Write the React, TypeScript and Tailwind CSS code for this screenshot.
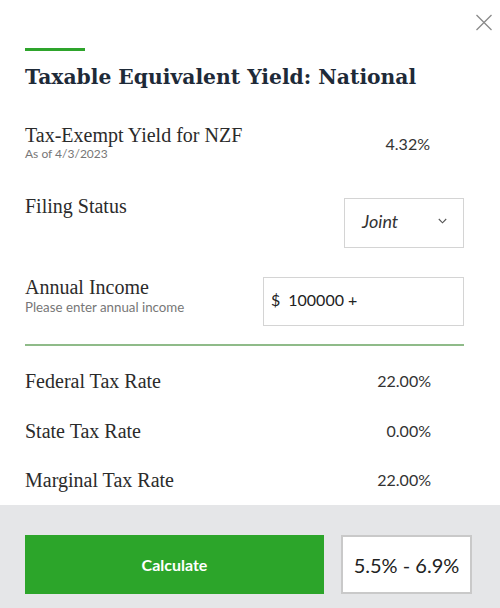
const serif = "font-['Liberation_Serif',serif]";
const sans = "font-['Lato','Noto_Sans',sans-serif]";

const rates = [
  { label: 'Federal Tax Rate', value: '22.00%' },
  { label: 'State Tax Rate', value: '0.00%' },
  { label: 'Marginal Tax Rate', value: '22.00%' },
];

export default function App() {
  return (
    <div className="relative flex h-[608px] w-[500px] flex-col overflow-hidden bg-white text-[#2b2b2b]">
      {/* close */}
      <button className="absolute right-[7px] top-[14px] text-[#8a8a8a]" aria-label="Close">
        <svg width="18" height="17" viewBox="0 0 18 17" fill="none" stroke="currentColor" strokeWidth="1.3">
          <path d="M1.5 1 L16.5 16 M16.5 1 L1.5 16" />
        </svg>
      </button>

      <div className="pl-[25px] pr-[36px] pt-[48px]">
        <div className="h-[3px] w-[60px] bg-[#2ea42c]" />
        <h1 className="mt-[13px] font-['DejaVu_Serif',serif] text-[20.3px] font-bold leading-[26px] text-[#1e2a38]">
          Taxable Equivalent Yield: National
        </h1>

        {/* tax-exempt yield */}
        <div className="mt-[34px] flex items-start justify-between">
          <div>
            <div className={`${serif} text-[20px] leading-[22px]`}>Tax-Exempt Yield for NZF</div>
            <div className={`${sans} text-[12px] leading-[16px] text-[#777]`}>As of 4/3/2023</div>
          </div>
          <div className={`${sans} mt-[10px] pr-[34px] text-[16px] leading-[20px] text-[#333]`}>4.32%</div>
        </div>

        {/* filing status */}
        <div className="mt-[36px] flex items-start justify-between">
          <div className={`${serif} mt-[-3px] text-[20px] leading-[22px]`}>Filing Status</div>
          <div className="flex h-[50px] w-[120px] items-center justify-between border border-[#d4d4d4] pb-[4px] pl-[17px] pr-[16px]">
            <span className={`${sans} text-[18px] italic text-[#333]`}>Joint</span>
            <svg width="9" height="6" viewBox="0 0 9 6" fill="none" stroke="#555" strokeWidth="1.1">
              <path d="M0.8 1 L4.5 4.8 L8.2 1" />
            </svg>
          </div>
        </div>

        {/* annual income */}
        <div className="mt-[29px] flex items-start justify-between">
          <div className="mt-[-1px]">
            <div className={`${serif} text-[20px] leading-[22px]`}>Annual Income</div>
            <div className={`${sans} text-[13.3px] leading-[18px] text-[#777]`}>Please enter annual income</div>
          </div>
          <div className={`${sans} flex h-[49px] w-[201px] items-center border border-[#d4d4d4] pb-[3px] pl-[7px] text-[16px] text-[#222]`}>
            <span>$</span>
            <span className="ml-[8px]">100000 +</span>
          </div>
        </div>

        <div className="mt-[18px] h-[2px] bg-[#8fbb89]" />

        {/* rates */}
        <div className="mt-[24px] flex flex-col gap-[27.5px]">
          {rates.map((r) => (
            <div key={r.label} className="flex h-[22px] items-center justify-between">
              <span className={`${serif} text-[20px]`}>{r.label}</span>
              <span className={`${sans} pr-[33px] text-[16px] text-[#333]`}>{r.value}</span>
            </div>
          ))}
        </div>
      </div>

      {/* footer */}
      <div className="mt-auto flex h-[103px] items-start bg-[#e5e6e8] pl-[25px] pt-[30px]">
        <button className={`${sans} h-[59px] w-[299px] bg-[#2ca52a] text-[16px] font-bold text-white`}>
          Calculate
        </button>
        <div className={`${sans} ml-[17px] flex h-[59px] w-[131px] items-center justify-center border-2 border-[#c9c9c9] bg-white text-[20px] text-[#222]`}>
          5.5% - 6.9%
        </div>
      </div>
    </div>
  );
}
